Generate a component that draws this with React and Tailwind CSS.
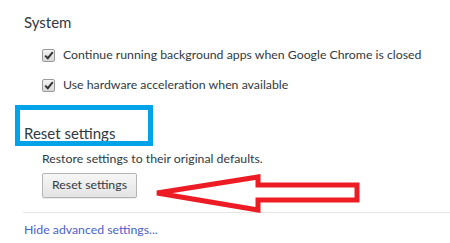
import React from 'react';

const Checkbox = () => (
  <div className="shrink-0 w-[13px] h-[13px] rounded-[2px] border border-[#9a9a9a] bg-gradient-to-b from-[#f4f4f4] to-[#d8d8d8] flex items-center justify-center">
    <svg width="10" height="9" viewBox="0 0 10 9">
      <path d="M1.2 4.6 L3.8 7.2 L8.8 1.2" fill="none" stroke="#333" strokeWidth="2" />
    </svg>
  </div>
);

const Option = ({ label }) => (
  <label className="flex items-center gap-[8px] h-[30px]">
    <Checkbox />
    <span className="text-[12.3px] whitespace-nowrap text-[#303942]">{label}</span>
  </label>
);

const App = () => {
  return (
    <div
      className="relative w-[450px] h-[243px] bg-white overflow-hidden"
      style={{ fontFamily: 'Lato, "Open Sans", sans-serif' }}
    >
      <div className="pt-[11px]">
        <h3 className="pl-[24px] text-[15px] leading-[22px] text-[#303942]">System</h3>
        <div className="pl-[42px] mt-[7px]">
          <Option label="Continue running background apps when Google Chrome is closed" />
          <Option label="Use hardware acceleration when available" />
        </div>

        <h3 className="pl-[24px] mt-[22px] text-[15px] leading-[22px] text-[#303942]">Reset settings</h3>
        <div className="pl-[42px] mt-[6px]">
          <p className="text-[12.3px] leading-[18px] text-[#303942]">Restore settings to their original defaults.</p>
          <button className="mt-[5px] w-[95px] h-[25px] rounded-[2px] border border-[#b4b4b4] bg-gradient-to-b from-[#f6f6f6] to-[#e4e4e4] text-[12.3px] text-[#303942] shadow-[0_1px_0_rgba(0,0,0,0.08)]">
            Reset settings
          </button>
        </div>

        <div className="ml-[23px] mt-[14px] border-t border-[#e6e6e6]" />
        <a className="block pl-[24px] mt-[8px] text-[12.3px] leading-[18px] text-[#4b61c8]">Hide advanced settings...</a>
      </div>

      {/* annotations */}
      <div className="absolute left-[15px] top-[105px] w-[138px] h-[41px] border-[5px] border-[#00a2e8]" />
      <svg className="absolute left-0 top-0" width="450" height="243">
        <polygon
          points="157,193 258,177 258,185 357,185 357,200 258,200 258,210"
          fill="none"
          stroke="#ed1c24"
          strokeWidth="5"
          strokeLinejoin="miter"
        />
      </svg>
    </div>
  );
};

export default App;
